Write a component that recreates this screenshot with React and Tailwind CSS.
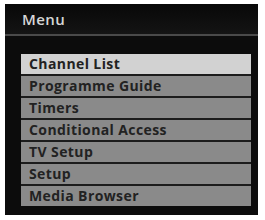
const items = [
  "Channel List",
  "Programme Guide",
  "Timers",
  "Conditional Access",
  "TV Setup",
  "Setup",
  "Media Browser",
];

export default function App() {
  return (
    <div className="w-[265px] h-[220px] bg-white pt-[4px] pl-[5px] font-['Open_Sans',sans-serif]">
      <div className="w-[253px] h-[211px] bg-[#0c0c0c] flex flex-col">
        <div className="h-[30px] flex items-center pl-[17px] bg-gradient-to-b from-[#080808] to-[#141414]">
          <span className="text-[15px] font-semibold text-[#d6d6d6] leading-none tracking-[0.4px]">Menu</span>
        </div>
        <div className="h-[2px] bg-[#4a4a4a]" />
        <div className="flex-1 pt-[18px] pl-[16px] pr-[7px]">
          <div className="flex flex-col gap-[2px] bg-[#1c1c1c]">
            {items.map((label, i) => (
              <div
                key={label}
                className={
                  "h-[20px] flex items-center pl-[8px] text-[14px] font-bold text-[#222] leading-none tracking-[0.4px] " +
                  (i === 0 ? "bg-[#d2d2d2]" : "bg-[#8a8a8a]")
                }
              >
                {label}
              </div>
            ))}
          </div>
        </div>
      </div>
    </div>
  );
}
